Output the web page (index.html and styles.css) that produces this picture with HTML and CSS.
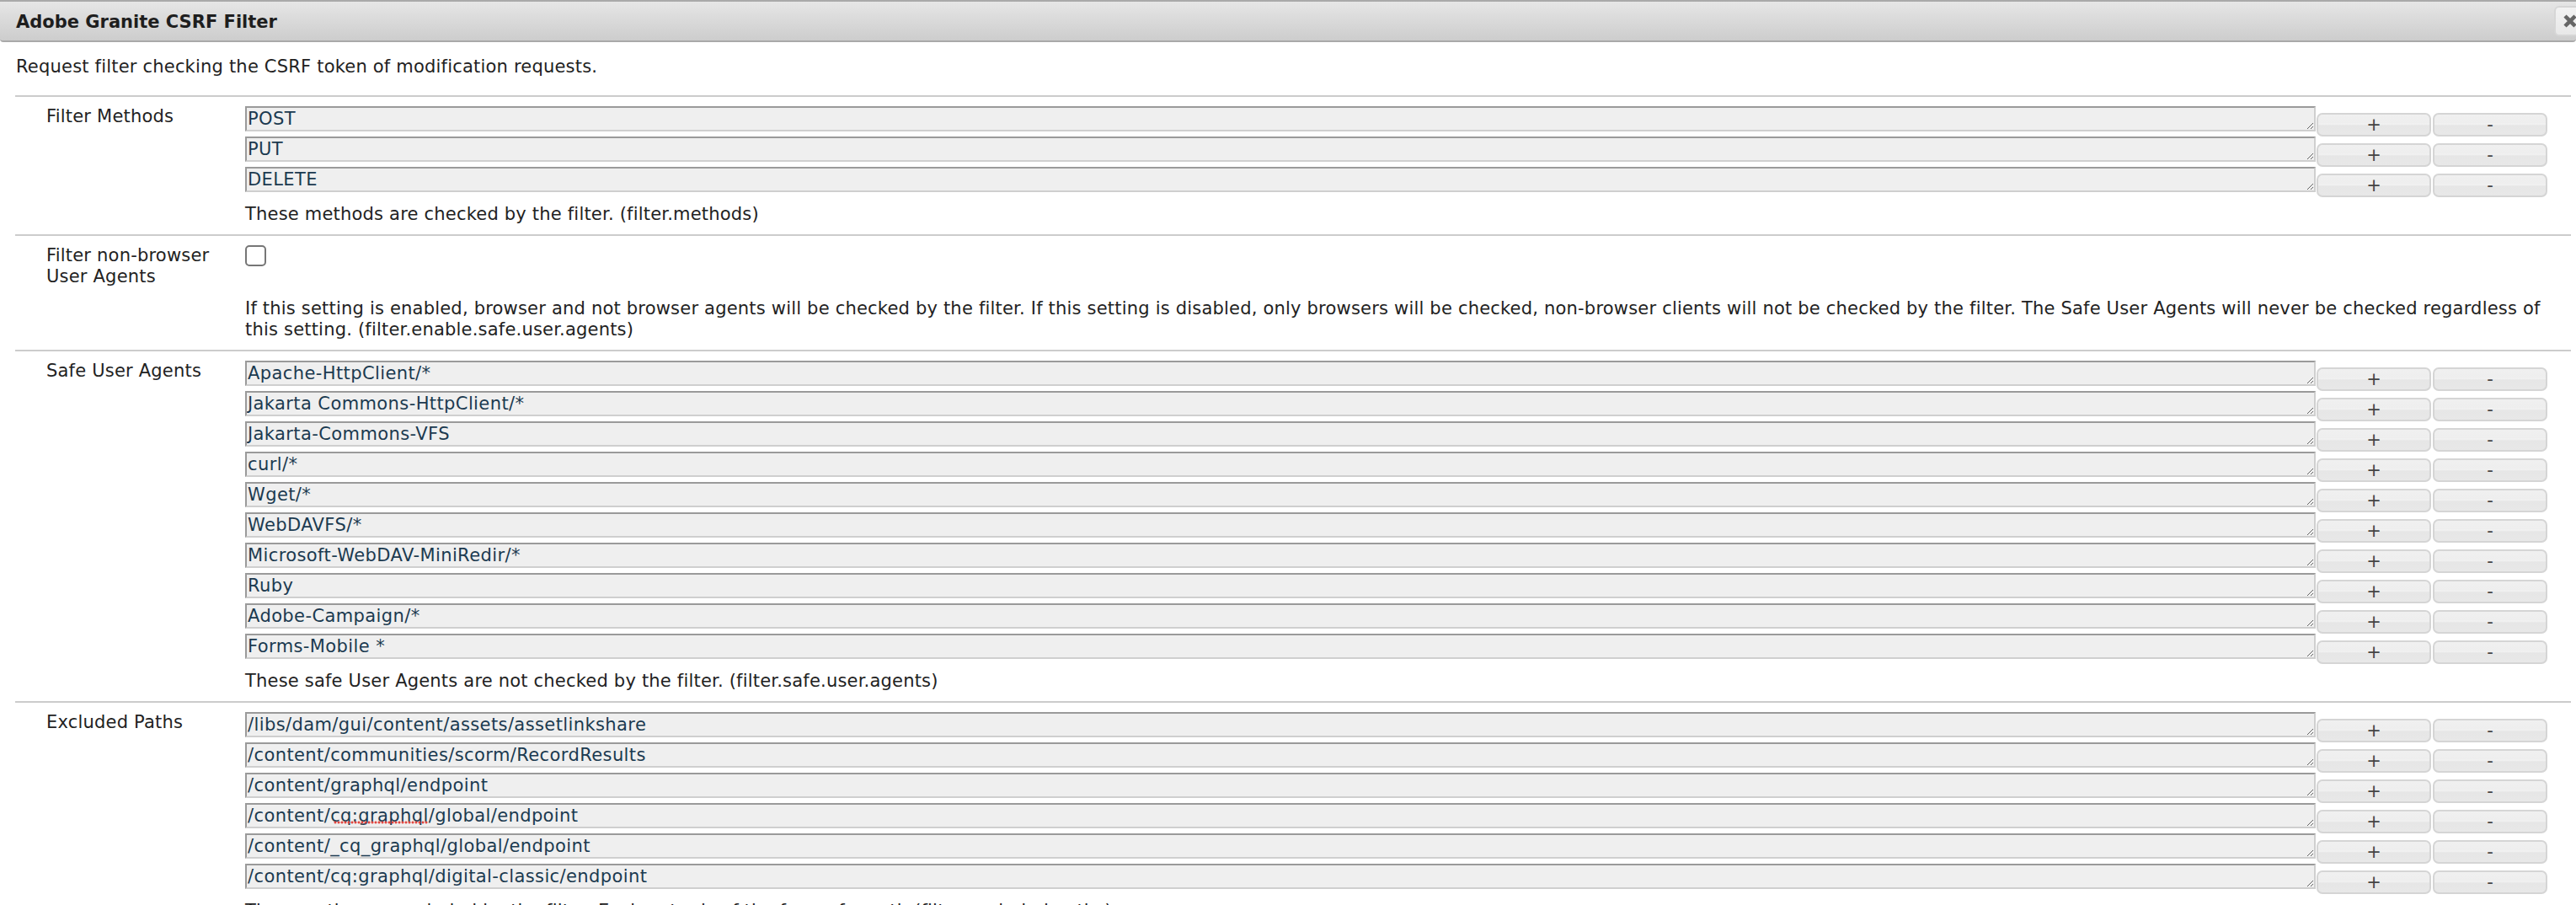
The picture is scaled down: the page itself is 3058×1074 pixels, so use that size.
FILE: index.html
```html
<!DOCTYPE html>
<html lang="en">
<head>
<meta charset="utf-8">
<title>Adobe Granite CSRF Filter</title>
<link rel="stylesheet" href="styles.css">
</head>
<body>
<div class="dialog">
  <div class="titlebar">
    <span class="title">Adobe Granite CSRF Filter</span>
    <button class="close" type="button" aria-label="close">
      <svg width="18" height="18" viewBox="0 0 18 18"><path d="M3 3 L15 15 M15 3 L3 15" stroke="#666" stroke-width="4.5" stroke-linecap="butt"/></svg>
    </button>
  </div>
  <div class="content">
    <p class="desc">Request filter checking the CSRF token of modification requests.</p>
    <div class="props">
      <div class="prop">
        <div class="label">Filter Methods</div>
        <div class="value">
          <div class="entry"><textarea class="field" spellcheck="false">POST</textarea><button class="btn" type="button">+</button><button class="btn" type="button">-</button></div>
          <div class="entry"><textarea class="field" spellcheck="false">PUT</textarea><button class="btn" type="button">+</button><button class="btn" type="button">-</button></div>
          <div class="entry"><textarea class="field" spellcheck="false">DELETE</textarea><button class="btn" type="button">+</button><button class="btn" type="button">-</button></div>
          <div class="help">These methods are checked by the filter. (filter.methods)</div>
        </div>
      </div>
      <div class="prop">
        <div class="label">Filter non-browser User Agents</div>
        <div class="value">
          <div class="check-line"><input class="check" type="checkbox"></div>
          <div class="help">If this setting is enabled, browser and not browser agents will be checked by the filter. If this setting is disabled, only browsers will be checked, non-browser clients will not be checked by the filter. The Safe User Agents will never be checked regardless of this setting. (filter.enable.safe.user.agents)</div>
        </div>
      </div>
      <div class="prop">
        <div class="label">Safe User Agents</div>
        <div class="value">
          <div class="entry"><textarea class="field" spellcheck="false">Apache-HttpClient/*</textarea><button class="btn" type="button">+</button><button class="btn" type="button">-</button></div>
          <div class="entry"><textarea class="field" spellcheck="false">Jakarta Commons-HttpClient/*</textarea><button class="btn" type="button">+</button><button class="btn" type="button">-</button></div>
          <div class="entry"><textarea class="field" spellcheck="false">Jakarta-Commons-VFS</textarea><button class="btn" type="button">+</button><button class="btn" type="button">-</button></div>
          <div class="entry"><textarea class="field" spellcheck="false">curl/*</textarea><button class="btn" type="button">+</button><button class="btn" type="button">-</button></div>
          <div class="entry"><textarea class="field" spellcheck="false">Wget/*</textarea><button class="btn" type="button">+</button><button class="btn" type="button">-</button></div>
          <div class="entry"><textarea class="field" spellcheck="false">WebDAVFS/*</textarea><button class="btn" type="button">+</button><button class="btn" type="button">-</button></div>
          <div class="entry"><textarea class="field" spellcheck="false">Microsoft-WebDAV-MiniRedir/*</textarea><button class="btn" type="button">+</button><button class="btn" type="button">-</button></div>
          <div class="entry"><textarea class="field" spellcheck="false">Ruby</textarea><button class="btn" type="button">+</button><button class="btn" type="button">-</button></div>
          <div class="entry"><textarea class="field" spellcheck="false">Adobe-Campaign/*</textarea><button class="btn" type="button">+</button><button class="btn" type="button">-</button></div>
          <div class="entry"><textarea class="field" spellcheck="false">Forms-Mobile *</textarea><button class="btn" type="button">+</button><button class="btn" type="button">-</button></div>
          <div class="help">These safe User Agents are not checked by the filter. (filter.safe.user.agents)</div>
        </div>
      </div>
      <div class="prop">
        <div class="label">Excluded Paths</div>
        <div class="value">
          <div class="entry"><textarea class="field" spellcheck="false">/libs/dam/gui/content/assets/assetlinkshare</textarea><button class="btn" type="button">+</button><button class="btn" type="button">-</button></div>
          <div class="entry"><textarea class="field" spellcheck="false">/content/communities/scorm/RecordResults</textarea><button class="btn" type="button">+</button><button class="btn" type="button">-</button></div>
          <div class="entry"><textarea class="field" spellcheck="false">/content/graphql/endpoint</textarea><button class="btn" type="button">+</button><button class="btn" type="button">-</button></div>
          <div class="entry"><textarea class="field" spellcheck="false">/content/cq:graphql/global/endpoint</textarea><span class="squiggle"></span><button class="btn" type="button">+</button><button class="btn" type="button">-</button></div>
          <div class="entry"><textarea class="field" spellcheck="false">/content/_cq_graphql/global/endpoint</textarea><button class="btn" type="button">+</button><button class="btn" type="button">-</button></div>
          <div class="entry"><textarea class="field" spellcheck="false">/content/cq:graphql/digital-classic/endpoint</textarea><button class="btn" type="button">+</button><button class="btn" type="button">-</button></div>
          <div class="help">These paths are excluded by the filter. Each entry is of the form of a path (filter.excluded.paths)</div>
        </div>
      </div>
    </div>
  </div>
</div>
</body>
</html>
```
FILE: styles.css
```css
html, body {
  margin: 0;
  padding: 0;
  overflow: hidden;
  background: #ffffff;
}

body {
  font-family: "DejaVu Sans", Verdana, sans-serif;
  font-size: 21px;
  line-height: 25px;
  letter-spacing: 0.2px;
  color: #222222;
}

.dialog {
  width: 3058px;
}

.titlebar {
  display: flex;
  align-items: center;
  height: 50px;
  box-sizing: border-box;
  border-top: 2px solid #a9a9a9;
  border-bottom: 2px solid #a9a9a9;
  border-radius: 0 0 4px 4px;
  background: linear-gradient(#e6e6e6, #d9d9d9 50%, #cdcdcd);
  padding: 3px 0 0 19px;
  overflow: hidden;
}

.title {
  flex: 1;
  font-weight: bold;
  letter-spacing: 0;
  color: #1e1e1e;
}

.close {
  flex: none;
  width: 40px;
  height: 36px;
  margin: -3px -14px 0 0;
  padding: 0;
  box-sizing: border-box;
  border: 2px solid #d6d6d6;
  border-radius: 6px;
  background: linear-gradient(#f2f2f2, #e8e8e8);
  display: flex;
  align-items: center;
  justify-content: center;
}

.close svg {
  display: block;
  margin-left: -2px;
}

.content {
  padding: 0 6px 0 18px;
}

.desc {
  margin: 17px 0 21px 1px;
}

.props {
  border-top: 2px solid #cccccc;
}

.prop {
  display: grid;
  grid-template-columns: 273px 1fr;
  padding: 11px 0 11px 0;
  border-bottom: 2px solid #cccccc;
}

.label {
  padding: 0 10px 0 37px;
}

.value {
  min-width: 0;
}

.entry {
  position: relative;
  display: flex;
  align-items: flex-start;
  height: 36px;
}

.field {
  flex: none;
  width: 2458px;
  height: 30px;
  box-sizing: border-box;
  margin: 0;
  padding: 1px 1px;
  border-width: 2px;
  border-style: solid;
  border-color: #9a9a9a #cfcfcf #cfcfcf #9a9a9a;
  background: #efefef;
  color: #1b3a50;
  font-family: "DejaVu Sans", Verdana, sans-serif;
  font-size: 21px;
  line-height: 24px;
  letter-spacing: 0.4px;
  overflow: hidden;
  resize: both;
}

.btn {
  flex: none;
  width: 136px;
  height: 28px;
  margin: 8px 0 0 1px;
  padding: 0;
  box-sizing: border-box;
  border: 2px solid #d5d5d5;
  border-radius: 7px;
  background: linear-gradient(#f0f0f0 0%, #eeeeee 42%, #f3f3f3 46%, #e6e6e6 54%, #e8e8e8 100%);
  color: #444444;
  font-family: "DejaVu Sans", Verdana, sans-serif;
  font-size: 21px;
  line-height: 24px;
}

.btn + .btn {
  margin-left: 2px;
}

.squiggle {
  position: absolute;
  left: 105px;
  top: 21px;
  width: 112px;
  height: 4px;
  background-image: radial-gradient(circle, #e2463f 1.2px, transparent 1.8px);
  background-size: 4px 4px;
  background-repeat: repeat-x;
}

.check-line {
  height: 55px;
}

.check {
  appearance: none;
  -webkit-appearance: none;
  display: block;
  width: 25px;
  height: 25px;
  margin: 0;
  box-sizing: border-box;
  border: 2px solid #767676;
  border-radius: 5px;
  background: #ffffff;
}

.help {
  margin-top: 8px;
}
```
